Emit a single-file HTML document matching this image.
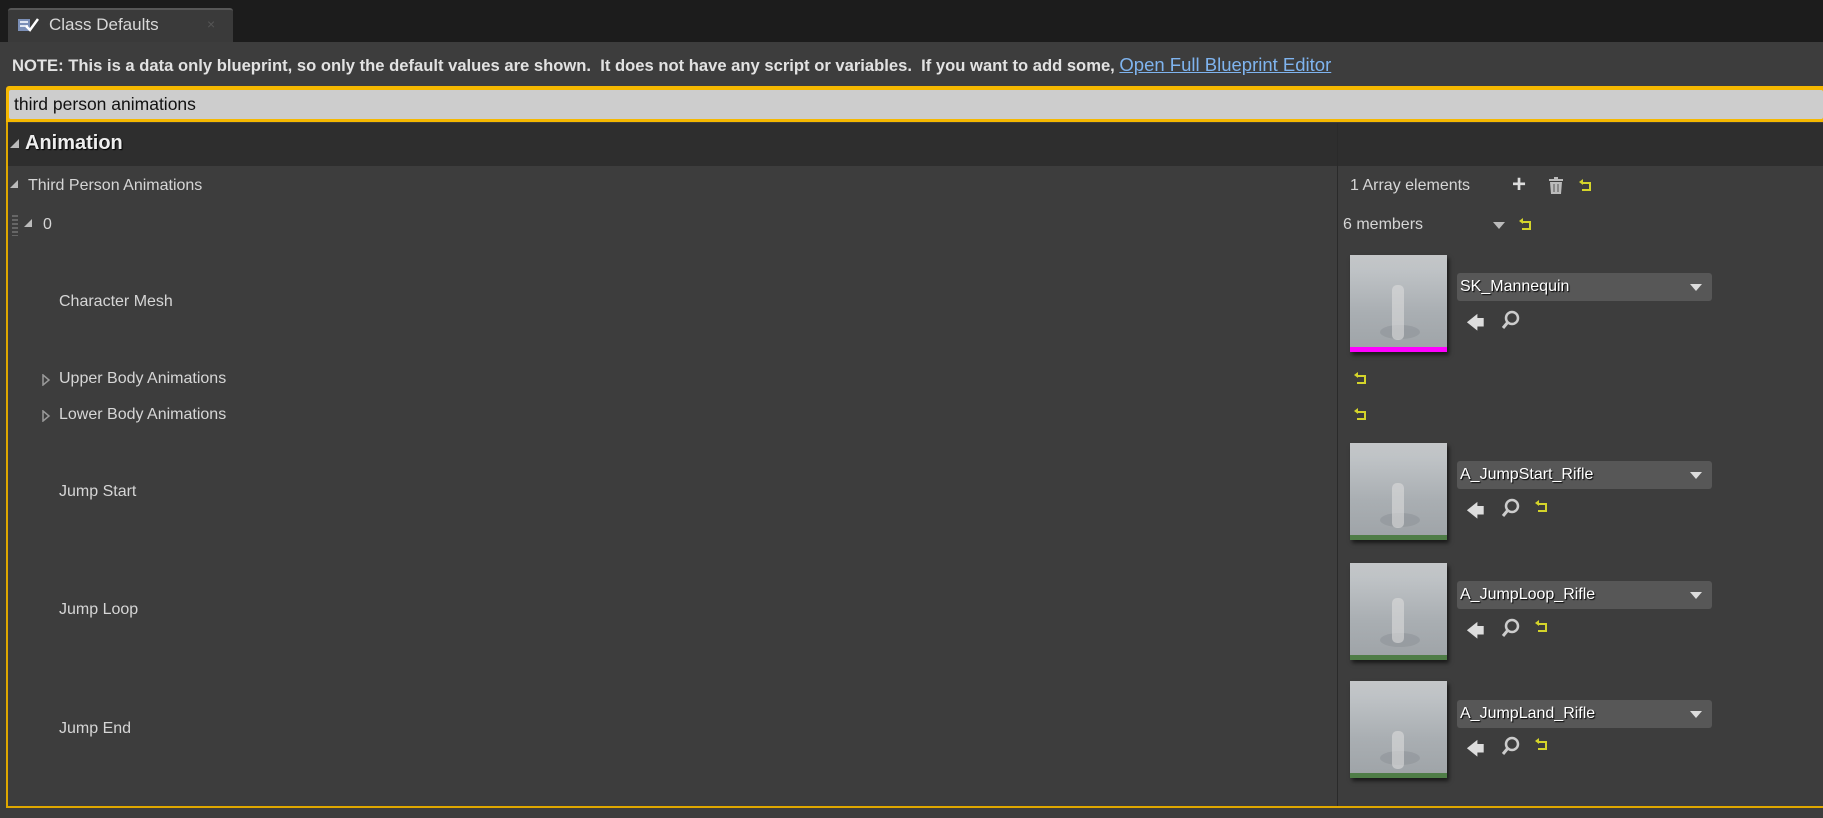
<!DOCTYPE html>
<html><head><style>
*{margin:0;padding:0;box-sizing:border-box}
body{width:1823px;height:818px;background:#1c1c1c;font-family:"Liberation Sans",sans-serif;color:#d8d8d8;position:relative;overflow:hidden}
.a{position:absolute;white-space:nowrap}
.t{font-size:16px;color:#d6d6d6}
.thumb{position:absolute;width:97px;height:97px;background:linear-gradient(#c4c6c8 0,#bfc3c6 15%,#a9aeb2 60%,#9ea3a7 100%);box-shadow:2px 3px 4px rgba(0,0,0,.6);overflow:hidden}
.thumb .fig{position:absolute;left:42px;top:30px;width:12px;height:55px;background:#dcdcdc;border-radius:5px;opacity:.6}
.thumb .sh{position:absolute;left:30px;top:70px;width:40px;height:14px;background:#8f959a;border-radius:50%;opacity:.6}
.thumb .bar{position:absolute;left:0;right:0;bottom:0;height:5px;background:#4f7d47}
.dd{position:absolute;width:255px;height:28px;background:#575757;border-radius:3px;font-size:16px;color:#fff;padding:5px 3px;text-shadow:1px 1px 1px #000}
.dd:after{content:"";position:absolute;right:10px;top:11px;border:6px solid transparent;border-top:7px solid #ddd;border-bottom:0}
.rs{position:absolute;width:9px;height:9px;border:2px solid #d4d42a;border-left:none}
.rs:before{content:"";position:absolute;left:-3px;top:-5px;border:3px solid transparent;border-right:4px solid #d4d42a;border-left:0}
</style></head><body>
<div class="a" style="left:8px;top:8px;width:225px;height:34px;background:#3a3a3a;border-top:2px solid #575757;border-radius:3px 3px 0 0"></div>
<svg class="a" style="left:17px;top:16px" width="22" height="18"><rect x="1" y="3" width="12" height="12" fill="#7b8fb7"/><rect x="3" y="5" width="8" height="2" fill="#e0e6f2"/><rect x="3" y="9" width="8" height="2" fill="#e0e6f2"/><path d="M9 10l4 4 8-11" stroke="#fff" stroke-width="2.5" fill="none"/></svg>
<div class="a" style="left:49px;top:15px;font-size:17px;color:#d8d8d8">Class Defaults</div>
<div class="a" style="left:207px;top:16px;font-size:14px;color:#555">×</div>
<div class="a" style="left:0;top:42px;width:1823px;height:776px;background:#3d3d3d"></div>
<div class="a" style="left:12px;top:54px;font-size:16.6px;font-weight:bold;color:#e2e2e2">NOTE: This is a data only blueprint, so only the default values are shown.&nbsp; It does not have any script or variables.&nbsp; If you want to add some, <span style="font-weight:normal;color:#7fb4ef;text-decoration:underline;font-size:18.5px">Open Full Blueprint Editor</span></div>
<div class="a" style="left:6px;top:86px;width:1817px;height:36px;background:#f5b800;border-radius:3px 0 0 0"></div>
<div class="a" style="left:9px;top:90px;width:1814px;height:29px;background:#cdcdcd;border-radius:2px"></div>
<div class="a" style="left:14px;top:94px;font-size:17.5px;color:#111">third person animations</div>
<div class="a" style="left:6px;top:122px;width:2px;height:686px;background:#e0a800"></div>
<div class="a" style="left:6px;top:806px;width:1817px;height:2px;background:#e0a800"></div>
<div class="a" style="left:8px;top:123px;width:1815px;height:43px;background:#2e2e2e"></div>
<div class="a" style="left:1337px;top:123px;width:1px;height:683px;background:#2a2a2a"></div>
<div class="a" style="left:10px;top:139px;width:0;height:0;border-left:9px solid transparent;border-bottom:9px solid #bbb"></div>
<div class="a" style="left:25px;top:132px;font-size:20px;font-weight:bold;color:#eee;text-shadow:1px 1px 1px #000">Animation</div>
<div class="a" style="left:10px;top:180px;width:0;height:0;border-left:8px solid transparent;border-bottom:8px solid #bbb"></div>
<div class="a t" style="left:28px;top:177px">Third Person Animations</div>
<div class="a" style="left:12px;top:215px;width:6px;height:21px;background:repeating-linear-gradient(#777 0 2px,transparent 2px 4px);opacity:.7"></div>
<div class="a" style="left:24px;top:219px;width:0;height:0;border-left:8px solid transparent;border-bottom:8px solid #bbb"></div>
<div class="a t" style="left:43px;top:216px">0</div>
<div class="a t" style="left:59px;top:293px">Character Mesh</div>
<div class="a" style="left:42px;top:373px;width:9px;height:12px"><svg width="9" height="12"><path d="M1 1L7 6 1 11z" fill="none" stroke="#999" stroke-width="1.5"/></svg></div>
<div class="a t" style="left:59px;top:370px">Upper Body Animations</div>
<div class="a" style="left:42px;top:409px;width:9px;height:12px"><svg width="9" height="12"><path d="M1 1L7 6 1 11z" fill="none" stroke="#999" stroke-width="1.5"/></svg></div>
<div class="a t" style="left:59px;top:406px">Lower Body Animations</div>
<div class="a t" style="left:59px;top:483px">Jump Start</div>
<div class="a t" style="left:59px;top:601px">Jump Loop</div>
<div class="a t" style="left:59px;top:720px">Jump End</div>

<div class="a t" style="left:1350px;top:177px">1 Array elements</div>
<div class="a" style="left:1512px;top:177px;font-size:24px;font-weight:bold;color:#ddd;line-height:16px">+</div>
<svg class="a" style="left:1548px;top:177px" width="16" height="18"><rect x="1" y="2" width="14" height="2" fill="#bbb"/><rect x="6" y="0" width="4" height="2" fill="#bbb"/><path d="M2 5h12l-1 12H3z" fill="#bbb"/><path d="M6 7v8M10 7v8" stroke="#555"/></svg>
<div class="rs" style="left:1582px;top:182px"></div>
<div class="a t" style="left:1343px;top:216px">6 members</div>
<div class="a" style="left:1493px;top:222px;border:6px solid transparent;border-top:7px solid #bbb;border-bottom:0"></div>
<div class="rs" style="left:1522px;top:221px"></div>

<div class="thumb" style="left:1350px;top:255px"><div class="sh"></div><div class="fig"></div><div class="bar" style="background:#ff00ff"></div></div>
<div class="dd" style="left:1457px;top:273px">SK_Mannequin</div>
<div class="a" style="left:1466px;top:311px;color:#ddd;font-size:18px">🡄</div>
<svg class="a" style="left:1501px;top:310px" width="20" height="20"><circle cx="11" cy="8" r="6" stroke="#ccc" stroke-width="2.5" fill="none"/><path d="M7 12l-5 6" stroke="#ccc" stroke-width="3"/></svg>
<div class="rs" style="left:1357px;top:375px"></div>
<div class="rs" style="left:1357px;top:411px"></div>

<div class="thumb" style="left:1350px;top:443px"><div class="sh"></div><div class="fig" style="top:40px;height:45px"></div><div class="bar"></div></div>
<div class="dd" style="left:1457px;top:461px">A_JumpStart_Rifle</div>
<div class="a" style="left:1466px;top:499px;color:#ddd;font-size:18px">🡄</div>
<svg class="a" style="left:1501px;top:498px" width="20" height="20"><circle cx="11" cy="8" r="6" stroke="#ccc" stroke-width="2.5" fill="none"/><path d="M7 12l-5 6" stroke="#ccc" stroke-width="3"/></svg>
<div class="rs" style="left:1538px;top:503px"></div>

<div class="thumb" style="left:1350px;top:563px"><div class="sh"></div><div class="fig" style="top:35px;height:45px"></div><div class="bar"></div></div>
<div class="dd" style="left:1457px;top:581px">A_JumpLoop_Rifle</div>
<div class="a" style="left:1466px;top:619px;color:#ddd;font-size:18px">🡄</div>
<svg class="a" style="left:1501px;top:618px" width="20" height="20"><circle cx="11" cy="8" r="6" stroke="#ccc" stroke-width="2.5" fill="none"/><path d="M7 12l-5 6" stroke="#ccc" stroke-width="3"/></svg>
<div class="rs" style="left:1538px;top:623px"></div>

<div class="thumb" style="left:1350px;top:681px"><div class="sh"></div><div class="fig" style="top:50px;height:38px"></div><div class="bar"></div></div>
<div class="dd" style="left:1457px;top:700px">A_JumpLand_Rifle</div>
<div class="a" style="left:1466px;top:737px;color:#ddd;font-size:18px">🡄</div>
<svg class="a" style="left:1501px;top:736px" width="20" height="20"><circle cx="11" cy="8" r="6" stroke="#ccc" stroke-width="2.5" fill="none"/><path d="M7 12l-5 6" stroke="#ccc" stroke-width="3"/></svg>
<div class="rs" style="left:1538px;top:741px"></div>
</body></html>
